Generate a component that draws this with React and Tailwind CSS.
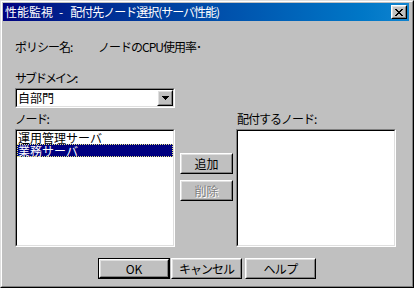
import React from "react";

function Raised({ className = "", innerClassName = "", children }) {
  return (
    <div className={`border border-t-white border-l-white border-r-black border-b-black ${className}`}>
      <div className={`h-full w-full border border-t-[#dfdfdf] border-l-[#dfdfdf] border-r-[#808080] border-b-[#808080] bg-[#c0c0c0] flex items-center justify-center ${innerClassName}`}>
        {children}
      </div>
    </div>
  );
}

function Sunken({ className = "", innerClassName = "", children }) {
  return (
    <div className={`border border-t-[#808080] border-l-[#808080] border-r-white border-b-white ${className}`}>
      <div className={`h-full w-full border border-t-black border-l-black border-r-[#dfdfdf] border-b-[#dfdfdf] bg-white ${innerClassName}`}>
        {children}
      </div>
    </div>
  );
}

function CloseGlyph() {
  const rows = [
    [0, 1, 6, 7],
    [1, 2, 5, 6],
    [2, 3, 4, 5],
    [3, 4],
    [2, 3, 4, 5],
    [1, 2, 5, 6],
    [0, 1, 6, 7],
  ];
  return (
    <svg width="8" height="7" viewBox="0 0 8 7" shapeRendering="crispEdges">
      {rows.map((cols, y) =>
        cols.map((x) => <rect key={`${x}-${y}`} x={x} y={y} width="1" height="1" fill="#000" />)
      )}
    </svg>
  );
}

function ArrowGlyph() {
  return (
    <svg width="7" height="4" viewBox="0 0 7 4" shapeRendering="crispEdges">
      <rect x="0" y="0" width="7" height="1" fill="#000" />
      <rect x="1" y="1" width="5" height="1" fill="#000" />
      <rect x="2" y="2" width="3" height="1" fill="#000" />
      <rect x="3" y="3" width="1" height="1" fill="#000" />
    </svg>
  );
}

export default function App() {
  return (
    <div className="w-[414px] h-[288px] overflow-hidden bg-[#c0c0c0] text-[12px] text-black font-['Noto_Sans_CJK_JP','Noto_Sans',sans-serif]">
      <div className="h-full border border-t-[#dfdfdf] border-l-[#dfdfdf] border-r-black border-b-black">
        <div className="h-full border border-t-white border-l-white border-r-[#808080] border-b-[#808080] p-px flex flex-col">
          {/* Title bar */}
          <div className="h-[18px] mr-[2px] flex items-center pl-[2px] pr-[2px] bg-linear-to-r from-[#000080] to-[#1084d0] text-white">
            <div className="flex-1 leading-[14px] whitespace-nowrap flex">
              <span>性能監視</span>
              <span className="ml-[6px] mr-[7px]">-</span>
              <span className="tracking-[-1px]">配付先ノード選択(サーバ性能)</span>
            </div>
            <Raised className="w-[16px] h-[14px]">
              <CloseGlyph />
            </Raised>
          </div>

          {/* Body */}
          <div className="pl-[12px] flex flex-col">
            <div className="mt-[19px] h-[14px] leading-[14px] flex whitespace-nowrap">
              <span className="w-[83px] tracking-[-1px]">ポリシー名:</span>
              <span className="tracking-[-1px]">ノードのCPU使用率･</span>
            </div>

            <div className="mt-[17px] h-[14px] leading-[14px] tracking-[-2px] whitespace-nowrap">サブドメイン:</div>

            <Sunken className="mt-[3px] w-[160px] h-[20px]" innerClassName="flex items-center">
              <span className="flex-1 pl-[1px] leading-[14px]">自部門</span>
              <Raised className="w-[16px] h-full">
                <ArrowGlyph />
              </Raised>
            </Sunken>

            <div className="mt-[4px] h-[14px] leading-[14px] flex whitespace-nowrap">
              <span className="w-[222px] tracking-[-1.5px]">ノード:</span>
              <span className="tracking-[-1px]">配付するノード:</span>
            </div>

            <div className="mt-[3px] h-[118px] flex">
              <Sunken className="w-[160px] h-full">
                <div className="h-[13px] leading-[13px] pl-[1px] whitespace-nowrap">運用管理サーバ</div>
                <div className="h-[13px] leading-[13px] pl-[1px] bg-[#000080] text-white outline outline-1 outline-dotted outline-[#e8e880] -outline-offset-1 whitespace-nowrap">
                  業務サーバ
                </div>
              </Sunken>
              <div className="w-[61px] pl-[5px] pt-[24px] flex flex-col gap-[6px]">
                <Raised className="w-[53px] h-[21px]">
                  <span className="leading-[14px]">追加</span>
                </Raised>
                <Raised className="w-[53px] h-[21px]">
                  <span className="leading-[14px] text-[#808080] [text-shadow:1px_1px_0_#ffffff]">削除</span>
                </Raised>
              </div>
              <Sunken className="w-[160px] h-full" />
            </div>
          </div>

          <div className="mt-[11px] flex justify-center">
            <div className="w-[72px] h-[21px] border border-black">
              <Raised className="w-full h-full">
                <span className="leading-[14px]">OK</span>
              </Raised>
            </div>
            <Raised className="ml-[1px] w-[71px] h-[21px]">
              <span className="leading-[14px] tracking-[-1px]">キャンセル</span>
            </Raised>
            <Raised className="ml-[3px] w-[71px] h-[21px]">
              <span className="leading-[14px] tracking-[-0.7px]">ヘルプ</span>
            </Raised>
          </div>
        </div>
      </div>
    </div>
  );
}
